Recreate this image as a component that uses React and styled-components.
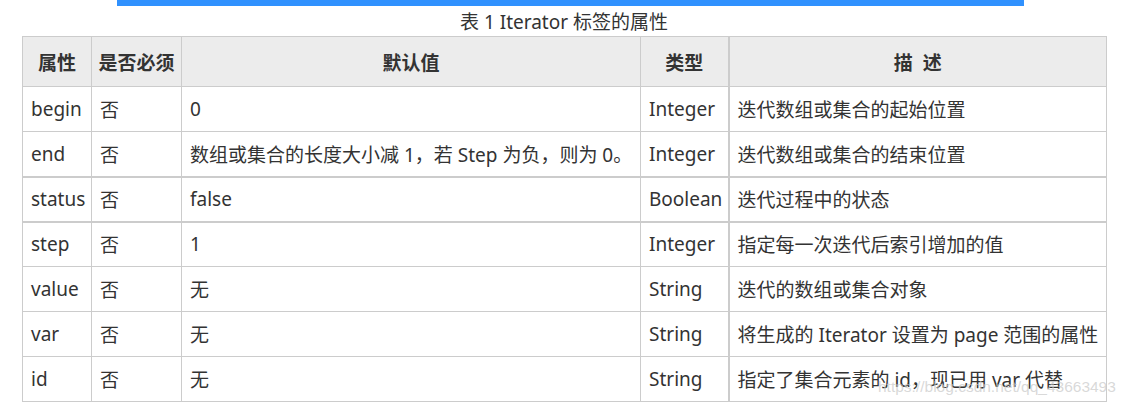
import React from "react";
import styled, { createGlobalStyle } from "styled-components";

const Global = createGlobalStyle`
  html, body { margin: 0; padding: 0; background: #fff; }
  body { font-family: "Noto Sans", "Noto Sans CJK SC", sans-serif; color: #333; }
`;

const Page = styled.div`
  position: relative;
  width: 1135px;
  height: 406px;
  overflow: hidden;
`;

const TopBar = styled.div`
  margin-left: 117px;
  width: 907px;
  height: 6px;
  background: #3091fe;
`;

const Caption = styled.div`
  width: 1084px;
  margin-left: 22px;
  height: 30px;
  display: flex;
  align-items: center;
  justify-content: center;
  font-size: 19px;
  color: #333;
`;

const Table = styled.table`
  margin-left: 22px;
  width: 1084px;
  border-collapse: collapse;
  table-layout: fixed;
  font-size: 19px;
`;

const Th = styled.th`
  height: 49px;
  background: #ececec;
  border: 1px solid #cccccc;
  border-left-width: ${p => (p.$thick ? "2px" : "1px")};
  font-weight: 700;
  color: #333;
  text-align: center;
  padding: 0;
  white-space: pre;
`;

const Tr = styled.tr`
  height: 45px;
`;

const Td = styled.td`
  border: 1px solid #cccccc;
  border-left-width: ${p => (p.$thick ? "2px" : "1px")};
  border-top-width: ${p => (p.$thickTop ? "2px" : "1px")};
  border-bottom-width: ${p => (p.$thickBottom ? "2px" : "1px")};
  padding: 0 0 0 8px;
  color: #333;
  white-space: nowrap;
  overflow: hidden;
`;

const Watermark = styled.div`
  position: absolute;
  left: 878px;
  top: 378px;
  font-family: "Liberation Sans", Arial, sans-serif;
  font-size: 15.5px;
  color: rgba(200, 200, 200, 0.7);
  white-space: nowrap;
  pointer-events: none;
`;

const rows = [
  ["begin", "否", "0", "Integer", "迭代数组或集合的起始位置"],
  ["end", "否", "数组或集合的长度大小减 1，若 Step 为负，则为 0。", "Integer", "迭代数组或集合的结束位置"],
  ["status", "否", "false", "Boolean", "迭代过程中的状态"],
  ["step", "否", "1", "Integer", "指定每一次迭代后索引增加的值"],
  ["value", "否", "无", "String", "迭代的数组或集合对象"],
  ["var", "否", "无", "String", "将生成的 Iterator 设置为 page 范围的属性"],
  ["id", "否", "无", "String", "指定了集合元素的 id，现已用 var 代替"],
];

export default function App() {
  return (
    <Page>
      <Global />
      <TopBar />
      <Caption>表 1 Iterator 标签的属性</Caption>
      <Table>
        <colgroup>
          <col style={{ width: 69 }} />
          <col style={{ width: 90 }} />
          <col style={{ width: 459 }} />
          <col style={{ width: 88 }} />
          <col style={{ width: 378 }} />
        </colgroup>
        <thead>
          <tr>
            <Th>属性</Th>
            <Th>是否必须</Th>
            <Th>默认值</Th>
            <Th>类型</Th>
            <Th $thick>{"描  述"}</Th>
          </tr>
        </thead>
        <tbody>
          {rows.map((r, i) => (
            <Tr key={i}>
              {r.map((c, j) => (
                <Td
                  key={j}
                  $thick={j === 4}
                  $thickTop={i === 2}
                  $thickBottom={i === 2}
                >
                  {c}
                </Td>
              ))}
            </Tr>
          ))}
        </tbody>
      </Table>
      <Watermark>https://blog.csdn.net/qq_43663493</Watermark>
    </Page>
  );
}
